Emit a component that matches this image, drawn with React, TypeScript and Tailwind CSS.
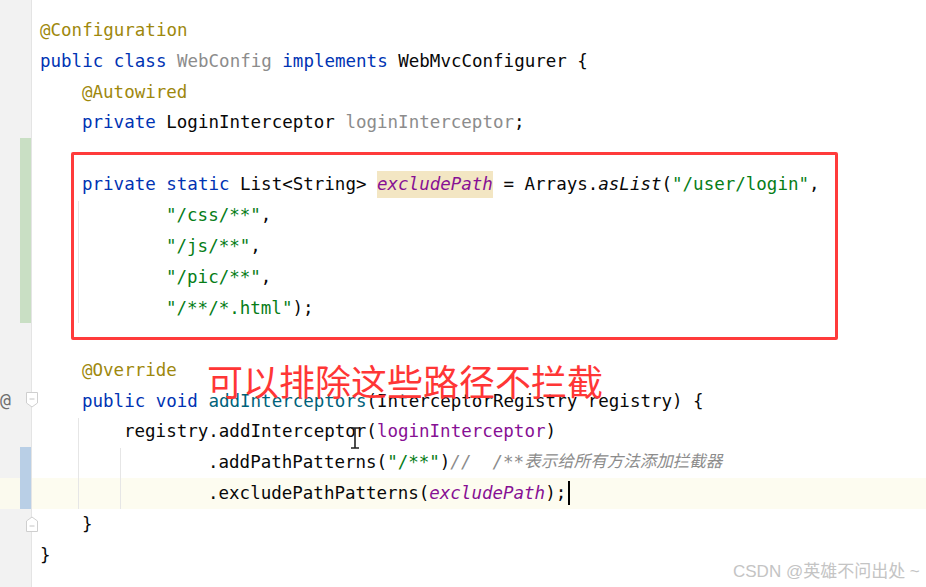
import React from "react";

type Seg = [string, string?];

const C = {
  ann: "text-[#9e880d]",
  kw: "text-[#0033b3]",
  def: "text-[#080808]",
  gray: "text-[#8c8c8c]",
  str: "text-[#067d17]",
  field: "text-[#871094] italic",
  fieldN: "text-[#871094]",
  decl: "text-[#00627a]",
  it: "text-[#080808] italic",
  cmt: "text-[#8c8c8c] italic",
};

type Line = {
  indent: number;
  segs: Seg[];
  current?: boolean;
  change?: "green" | "blue";
  at?: boolean;
  fold?: "down" | "up";
};

const lines: Line[] = [
  { indent: 0, segs: [["@Configuration", C.ann]] },
  {
    indent: 0,
    segs: [
      ["public class ", C.kw],
      ["WebConfig ", C.gray],
      ["implements ", C.kw],
      ["WebMvcConfigurer {", C.def],
    ],
  },
  { indent: 4, segs: [["@Autowired", C.ann]] },
  {
    indent: 4,
    segs: [
      ["private ", C.kw],
      ["LoginInterceptor ", C.def],
      ["loginInterceptor", C.gray],
      [";", C.def],
    ],
  },
  { indent: 0, segs: [], change: "green" },
  {
    indent: 4,
    change: "green",
    segs: [
      ["private static ", C.kw],
      ["List<String> ", C.def],
      ["excludePath", "HL"],
      [" = Arrays.", C.def],
      ["asList", C.it],
      ["(", C.def],
      ['"/user/login"', C.str],
      [",", C.def],
    ],
  },
  { indent: 12, change: "green", segs: [['"/css/**"', C.str], [",", C.def]] },
  { indent: 12, change: "green", segs: [['"/js/**"', C.str], [",", C.def]] },
  { indent: 12, change: "green", segs: [['"/pic/**"', C.str], [",", C.def]] },
  { indent: 12, change: "green", segs: [['"/**/*.html"', C.str], [");", C.def]] },
  { indent: 0, segs: [] },
  { indent: 4, segs: [["@Override", C.ann]] },
  {
    indent: 4,
    at: true,
    fold: "down",
    segs: [
      ["public void ", C.kw],
      ["addInterceptors", C.decl],
      ["(InterceptorRegistry registry) {", C.def],
    ],
  },
  {
    indent: 8,
    segs: [
      ["registry.addInterceptor(", C.def],
      ["loginInterceptor", C.fieldN],
      [")", C.def],
    ],
  },
  {
    indent: 16,
    change: "blue",
    segs: [
      [".addPathPatterns(", C.def],
      ['"/**"', C.str],
      [")", C.def],
      ["//  /**", C.cmt],
      ["CJK表示给所有方法添加拦截器", C.cmt],
    ],
  },
  {
    indent: 16,
    current: true,
    change: "blue",
    segs: [
      [".excludePathPatterns(", C.def],
      ["excludePath", C.field],
      [");", C.def],
      ["CURSOR"],
    ],
  },
  { indent: 4, fold: "up", segs: [["}", C.def]] },
  { indent: 0, segs: [["}", C.def]] },
];

const mono = { fontFamily: '"DejaVu Sans Mono", "Noto Sans CJK SC", monospace' };
const LH = 30.9;

function FoldIcon({ down }: { down: boolean }) {
  return (
    <svg width="12" height="16" viewBox="0 0 12 16">
      {down ? (
        <path d="M0.5 0.5 H11.5 V11 L6 15 L0.5 11 Z" fill="#fff" stroke="#cfcfcf" />
      ) : (
        <path d="M0.5 15.5 H11.5 V5 L6 1 L0.5 5 Z" fill="#fff" stroke="#cfcfcf" />
      )}
      <line x1="3.5" x2="8.5" y1={down ? 7 : 10} y2={down ? 7 : 10} stroke="#c4c4c4" />
    </svg>
  );
}

function GutterCell({ ln }: { ln: Line }) {
  return (
    <div
      className={`relative flex items-center justify-between ${ln.current ? "bg-[#fbfaee]" : ""}`}
      style={{ height: LH }}
    >
      <span className="w-[20px] text-[18px] leading-none text-[#6e6e6e] pb-[2px]">{ln.at ? "@" : ""}</span>
      <span
        className={`w-[11px] self-stretch ${
          ln.change === "green" ? "bg-[#c9dfc4]" : ln.change === "blue" ? "bg-[#b9cfe6]" : ""
        }`}
      />
      {ln.fold && (
        <span className="absolute right-[-7px] top-[7px] z-10 flex">
          <FoldIcon down={ln.fold === "down"} />
        </span>
      )}
    </div>
  );
}

function CodeLine({ ln }: { ln: Line }) {
  return (
    <div
      className={`flex items-center whitespace-pre text-[17.5px] ${ln.current ? "bg-[#fdfcf0]" : ""}`}
      style={{ height: LH, paddingLeft: 8 + ln.indent * 10.5 }}
    >
      {ln.segs.map((s, j) => {
        if (s[0] === "CURSOR")
          return <span key={j} className="inline-block w-[2px] h-[24px] bg-black ml-[2px]" />;
        if (s[1] === "HL")
          return (
            <span key={j} className="text-[#871094] italic bg-[#f3e6c3]">
              {s[0]}
            </span>
          );
        if (s[0].startsWith("CJK"))
          return (
            <span key={j} className={`${s[1]} text-[16.5px]`}>
              {s[0].slice(3)}
            </span>
          );
        return (
          <span key={j} className={s[1]}>
            {s[0]}
          </span>
        );
      })}
    </div>
  );
}

export default function App() {
  return (
    <div className="relative w-[926px] h-[587px] overflow-hidden bg-white" style={mono}>
      <div className="flex h-full">
        {/* gutter */}
        <div className="flex flex-col w-[32px] shrink-0 pt-[14.5px] bg-[#f2f2f2] border-r border-[#e4e4e4]">
          {lines.map((ln, i) => (
            <GutterCell key={i} ln={ln} />
          ))}
        </div>
        {/* editor */}
        <div className="relative flex flex-col flex-1 pt-[14.5px]">
          {lines.map((ln, i) => (
            <CodeLine key={i} ln={ln} />
          ))}

          {/* indent guides */}
          <div className="absolute left-[46px] top-[201px] w-px h-[122px] bg-[#e6e6e6]" />
          <div className="absolute left-[46px] top-[418px] w-px h-[91px] bg-[#e6e6e6]" />
          <div className="absolute left-[88px] top-[448px] w-px h-[61px] bg-[#e6e6e6]" />
        </div>
      </div>

      {/* text cursor I-beam */}
      <svg className="absolute left-[350px] top-[427px]" width="10" height="22" viewBox="0 0 10 22">
        <path d="M1 1 H9 M5 1 V21 M1 21 H9" stroke="#222" strokeWidth="1.6" fill="none" />
      </svg>

      {/* red annotation box */}
      <div className="absolute left-[71px] top-[152px] w-[767px] h-[188px] border-[3px] border-[#ff3b3b] rounded-[2px]" />

      {/* red annotation text */}
      <div
        className="absolute left-[207px] top-[358px] text-[36px] leading-[44px] text-[#ff3636] whitespace-nowrap"
        style={{ fontFamily: '"Noto Sans CJK SC", sans-serif' }}
      >
        可以排除这些路径不拦截
      </div>

      {/* watermark */}
      <div
        className="absolute left-[733px] top-[560px] text-[17px] leading-[24px] text-[#c4c4c4] whitespace-nowrap"
        style={{ fontFamily: '"Liberation Sans", "Noto Sans CJK SC", sans-serif' }}
      >
        CSDN @英雄不问出处 ~
      </div>
    </div>
  );
}
